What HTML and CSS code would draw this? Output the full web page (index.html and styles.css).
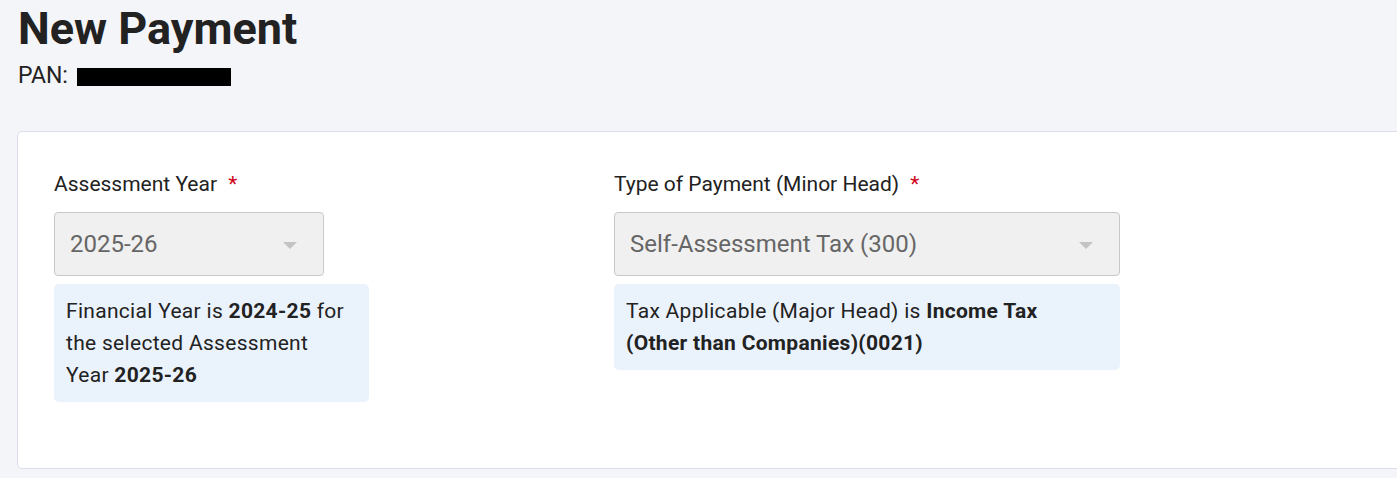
FILE: index.html
```html
<!DOCTYPE html>
<html lang="en">
<head>
<meta charset="utf-8">
<title>New Payment</title>
<link rel="stylesheet" href="styles.css">
</head>
<body>
<header class="page-head">
  <h1 class="title">New Payment</h1>
  <div class="pan">PAN: <span class="redact"></span></div>
</header>
<section class="card">
  <div class="field field-ay">
    <label class="label">Assessment Year <span class="req">*</span></label>
    <div class="select select-ay">
      <span class="value">2025-26</span>
      <span class="caret"></span>
    </div>
    <div class="info info-ay">Financial Year is <b>2024-25</b> for the selected Assessment Year <b>2025-26</b></div>
  </div>
  <div class="field field-type">
    <label class="label">Type of Payment (Minor Head) <span class="req">*</span></label>
    <div class="select select-type">
      <span class="value">Self-Assessment Tax (300)</span>
      <span class="caret"></span>
    </div>
    <div class="info info-type">Tax Applicable (Major Head) is <b>Income Tax (Other than Companies)(0021)</b></div>
  </div>
</section>
</body>
</html>
```

FILE: styles.css
```css
* { box-sizing: border-box; }
html, body { margin: 0; padding: 0; }
body {
  background: #f4f5f9;
  font-family: Roboto, "Liberation Sans", Arial, sans-serif;
  color: #222;
  overflow: hidden;
}
.page-head {
  padding: 2px 0 0 18px;
}
.title {
  margin: 0;
  font-size: 45px;
  font-weight: 700;
  line-height: 54px;
  color: #222;
}
.pan {
  margin-top: 7px;
  font-size: 23px;
  line-height: 26px;
  color: #222;
  display: flex;
  align-items: center;
}
.redact {
  display: inline-block;
  width: 154px;
  height: 18px;
  background: #000;
  margin-left: 9px;
  margin-top: 1px;
}
.card {
  margin: 42px -20px 0 17px;
  background: #fff;
  border: 1px solid #dcdcec;
  border-radius: 5px;
  padding: 39px 0 0 36px;
  display: grid;
  grid-template-columns: 560px 506px;
  align-items: start;
  height: 338px;
}
.label {
  display: block;
  font-size: 21px;
  line-height: 26px;
  color: #222;
  margin-bottom: 15px;
}
.req {
  color: #d0021b;
  margin-left: 6px;
}
.select {
  display: flex;
  align-items: center;
  justify-content: space-between;
  height: 64px;
  background: #f0f0f0;
  border: 1px solid #c8c8c8;
  border-radius: 4px;
  padding: 0 26px 0 15px;
}
.select-ay { width: 270px; }
.select-type { width: 506px; }
.value {
  font-size: 24px;
  color: #666;
}
.caret {
  width: 0;
  height: 0;
  border-left: 7px solid transparent;
  border-right: 7px solid transparent;
  border-top: 7px solid #c4c4c4;
  margin-top: 3px;
}
.info {
  margin-top: 8px;
  background: #eaf2fc;
  border-radius: 5px;
  padding: 11px 12px 11px 12px;
  font-size: 21px;
  line-height: 32px;
  color: #222;
  letter-spacing: 0.3px;
}
.info b { font-weight: 700; }
.info-ay { width: 315px; padding-right: 20px; }
.info-type { width: 506px; padding-right: 50px; }
```
